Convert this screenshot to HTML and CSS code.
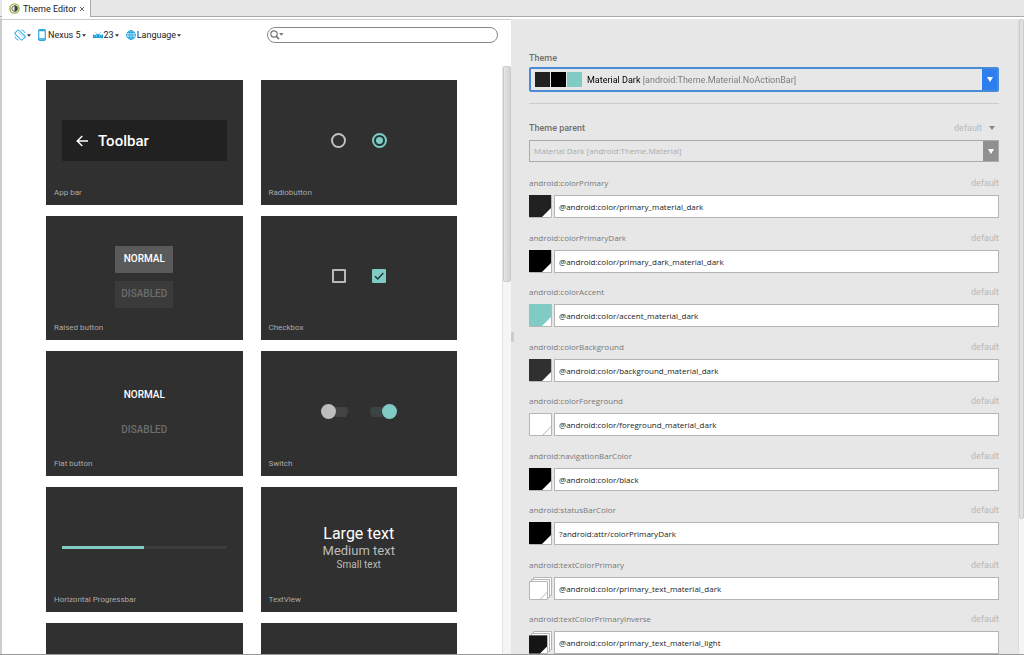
FILE: index.html
```html
<!DOCTYPE html>
<html lang="en">
<head>
<meta charset="utf-8">
<title>Theme Editor</title>
<link rel="stylesheet" href="styles.css">
</head>
<body>
<svg class="defs" aria-hidden="true">
  <symbol id="caret" viewBox="0 0 5 3"><path d="M0 0h5L2.5 3z"/></symbol>
  <symbol id="swatch" viewBox="0 0 23 23"><path class="paper" d="M.5.5h22v22H.5z"/><path class="ink" d="M0 0h22v13l-9 9H0z"/></symbol>
  <symbol id="swatch-light" viewBox="0 0 23 23"><path class="paper" d="M.5.5h22v22H.5z"/><path class="fold" d="M22.5 13l-9 9.500"/></symbol>
  <symbol id="stack" viewBox="0 0 23 23"><path class="paper" d="M4.500.5h18v18h-18z"/><path class="paper" d="M2.500 2.500h18v18h-18z"/><path class="paper" d="M.5 4.500h18v18H.5z"/><path class="ink" d="M0 4.500h18v11l-7 7H0z"/></symbol>
  <symbol id="stack-light" viewBox="0 0 23 23"><path class="paper" d="M4.500.5h18v18h-18z"/><path class="paper" d="M2.500 2.500h18v18h-18z"/><path class="paper" d="M.5 4.500h18v18H.5z"/><path class="fold" d="M18.500 15l-7.500 7.500"/></symbol>
</svg>
<div class="window">
  <header class="tabs">
    <div class="tab">
      <svg class="tab-icon" viewBox="0 0 12 12"><circle cx="6" cy="6" r="5" fill="#fff" stroke="#97b848" stroke-width="1.500"/><circle cx="6" cy="6" r="3" fill="#eee" stroke="#555" stroke-width="1"/><path d="M6 2.500a3.500 3.500 0 0 1 0 7z" fill="#444"/></svg>
      <span>Theme Editor</span>
      <button class="close" aria-label="Close tab"><svg viewBox="0 0 6 6"><path d="M1 1l4 4M5 1L1 5" stroke="#666" stroke-width="1"/></svg></button>
    </div>
  </header>
  <main class="panes">
    <section class="preview">
      <div class="toolbar">
        <div class="tools">
          <button class="tool orient" aria-label="Orientation"><svg class="icon" viewBox="0 0 12 12" fill="none" stroke="#29a9df"><rect x="3.300" y="1" width="5.400" height="10" rx="1" transform="rotate(-45 6 6)"/><path d="M4.500 3.200l4.300 4.300" stroke-width=".6"/><path d="M7.500.8A5.300 5.300 0 0 1 11.200 4.500M4.500 11.200A5.300 5.300 0 0 1 .8 7.500" stroke-width=".9"/></svg><svg class="caret"><use href="#caret"/></svg></button>
          <button class="tool device"><svg class="icon phone" viewBox="0 0 8 12"><rect x=".7" y=".7" width="6.600" height="10.600" rx="1" fill="#fff" stroke="#29a9df" stroke-width="1.200"/><path d="M1 1.500h6M1 10h6" stroke="#29a9df" stroke-width="1.300"/></svg><span>Nexus 5</span><svg class="caret"><use href="#caret"/></svg></button>
          <button class="tool api"><svg class="icon" viewBox="0 0 10 10"><path d="M1 8c0-5.200 8-5.200 8 0z" fill="#1ba1dc"/><path d="M0 4.800h1.300V8H0zM8.700 4.800H10V8H8.700zM2.500 2l1 2M7.500 2l-1 2" fill="#1ba1dc" stroke="#1ba1dc" stroke-width=".5"/><path d="M3 6h1M6 6h1" stroke="#fff" stroke-width=".7"/></svg><span>23</span><svg class="caret"><use href="#caret"/></svg></button>
          <button class="tool"><svg class="icon globe" viewBox="0 0 10 10" fill="none" stroke="#1ba1dc" stroke-width=".9"><circle cx="5" cy="5" r="4.400"/><ellipse cx="5" cy="5" rx="2" ry="4.400"/><path d="M.6 5h8.800M1.300 2.600h7.400M1.300 7.400h7.400M5 .6v8.800"/></svg><span>Language</span><svg class="caret"><use href="#caret"/></svg></button>
        </div>
        <label class="search"><svg viewBox="0 0 14 10"><circle cx="4" cy="4" r="3.200" fill="none" stroke="#777" stroke-width="1.200"/><path d="M6.200 6.200l2.800 3" stroke="#777" stroke-width="1.700"/><path d="M9 3h4.500l-2.200 2.800z" fill="#777"/></svg><input type="search" aria-label="Search components"></label>
      </div>
      <div class="scroller">
        <div class="cards">
          <article class="card">
            <div class="stage"><div class="appbar"><svg viewBox="0 0 12 12"><path d="M12 6H1.500M6.300 1L1.200 6l5.100 5" fill="none" stroke="#fff" stroke-width="1.400"/></svg><span>Toolbar</span></div></div>
            <h3>App bar</h3>
          </article>
          <article class="card">
            <div class="stage pair"><input class="radio" type="radio" name="r" aria-label="Off"><input class="radio" type="radio" name="r" aria-label="On" checked></div>
            <h3>Radiobutton</h3>
          </article>
          <article class="card">
            <div class="stage stacked"><button class="raised">NORMAL</button><button class="raised" disabled>DISABLED</button></div>
            <h3>Raised button</h3>
          </article>
          <article class="card">
            <div class="stage pair"><input class="check" type="checkbox" aria-label="Unchecked"><span class="checked"><input class="check" type="checkbox" aria-label="Checked" checked><svg viewBox="0 0 14 14"><path d="M3 7.200l2.800 2.800L11.300 4" fill="none" stroke="#203c3a" stroke-width="1.500"/></svg></span></div>
            <h3>Checkbox</h3>
          </article>
          <article class="card">
            <div class="stage stacked"><button class="flat">NORMAL</button><button class="flat" disabled>DISABLED</button></div>
            <h3>Flat button</h3>
          </article>
          <article class="card">
            <div class="stage switches"><input class="switch" type="checkbox" role="switch" aria-label="Switch off"><input class="switch" type="checkbox" role="switch" aria-label="Switch on" checked></div>
            <h3>Switch</h3>
          </article>
          <article class="card">
            <div class="stage"><div class="progress" role="progressbar" aria-label="Progress" aria-valuenow="50"><div class="bar" style="width:50%"></div></div></div>
            <h3>Horizontal Progressbar</h3>
          </article>
          <article class="card">
            <div class="stage texts"><p class="large">Large text</p><p class="medium">Medium text</p><p class="small">Small text</p></div>
            <h3>TextView</h3>
          </article>
          <article class="card"></article>
          <article class="card"></article>
        </div>
        <div class="track"><div class="thumb"></div></div>
      </div>
    </section>
    <div class="splitter"><span class="grip"></span></div>
    <section class="editor">
      <div class="form">
        <label class="title" for="theme">Theme</label>
        <div class="combo focused">
          <span class="chip primary"></span><span class="chip dark"></span><span class="chip accent"></span>
          <select id="theme"><option>Material Dark [android:Theme.Material.NoActionBar]</option></select>
          <span class="arrow"><svg viewBox="0 0 6 5"><path d="M0 0h6L3 5z"/></svg></span>
        </div>
        <hr>
        <div class="row parent-row">
          <label class="title" for="parent">Theme parent</label>
          <button class="default menu">default<svg viewBox="0 0 6 4"><path d="M0 0h6L3 4z"/></svg></button>
        </div>
        <div class="combo off">
          <select id="parent" disabled><option>Material Dark [android:Theme.Material]</option></select>
          <span class="arrow"><svg viewBox="0 0 6 5"><path d="M0 0h6L3 5z"/></svg></span>
        </div>
        <div class="attrs">
          <div class="attr"><div class="row"><label for="a1">android:colorPrimary</label><span class="default">default</span></div><div class="field"><svg class="swatch c-primary"><use href="#swatch"/></svg><input id="a1" value="@android:color/primary_material_dark"></div></div>
          <div class="attr"><div class="row"><label for="a2">android:colorPrimaryDark</label><span class="default">default</span></div><div class="field"><svg class="swatch c-black"><use href="#swatch"/></svg><input id="a2" value="@android:color/primary_dark_material_dark"></div></div>
          <div class="attr"><div class="row"><label for="a3">android:colorAccent</label><span class="default">default</span></div><div class="field"><svg class="swatch c-accent"><use href="#swatch"/></svg><input id="a3" value="@android:color/accent_material_dark"></div></div>
          <div class="attr"><div class="row"><label for="a4">android:colorBackground</label><span class="default">default</span></div><div class="field"><svg class="swatch c-bg"><use href="#swatch"/></svg><input id="a4" value="@android:color/background_material_dark"></div></div>
          <div class="attr"><div class="row"><label for="a5">android:colorForeground</label><span class="default">default</span></div><div class="field"><svg class="swatch"><use href="#swatch-light"/></svg><input id="a5" value="@android:color/foreground_material_dark"></div></div>
          <div class="attr"><div class="row"><label for="a6">android:navigationBarColor</label><span class="default">default</span></div><div class="field"><svg class="swatch c-black"><use href="#swatch"/></svg><input id="a6" value="@android:color/black"></div></div>
          <div class="attr"><div class="row"><label for="a7">android:statusBarColor</label><span class="default">default</span></div><div class="field"><svg class="swatch c-black"><use href="#swatch"/></svg><input id="a7" value="?android:attr/colorPrimaryDark"></div></div>
          <div class="attr"><div class="row"><label for="a8">android:textColorPrimary</label><span class="default">default</span></div><div class="field"><svg class="swatch"><use href="#stack-light"/></svg><input id="a8" value="@android:color/primary_text_material_dark"></div></div>
          <div class="attr"><div class="row"><label for="a9">android:textColorPrimaryInverse</label><span class="default">default</span></div><div class="field"><svg class="swatch c-ink"><use href="#stack"/></svg><input id="a9" value="@android:color/primary_text_material_light"></div></div>
        </div>
      </div>
      <div class="track"><div class="thumb"></div></div>
    </section>
  </main>
</div>
</body>
</html>
```
FILE: styles.css
```css
* { box-sizing: border-box; margin: 0; padding: 0; }
body { font: 9px/12px Roboto, "Noto Sans", sans-serif; color: #222; background: #e7e7e7; }
button, input, select { font: inherit; color: inherit; border: 0; background: none; outline: 0; appearance: none; }
svg { display: block; }
.defs { position: absolute; width: 0; height: 0; }

.window { height: 100vh; display: flex; flex-direction: column; overflow: hidden; border-bottom: 1px solid #999; }
.tabs { display: flex; flex: none; height: 17px; border-bottom: 1px solid #aaa; }
.tab { display: flex; align-items: center; height: 17px; margin-left: 2px; padding: 0 5px 0 7px; background: #fff; border-right: 1px solid #aaa; }
.tab-icon { width: 11px; height: 11px; margin-right: 3px; }
.close { width: 6px; height: 6px; margin-left: 3px; }

.panes { flex: 1; min-height: 0; display: flex; border-left: 2px solid #ccc; border-top: 2px solid #fff; }
.preview { flex: 1; min-width: 0; display: flex; flex-direction: column; background: #fff; border-top: 1px solid #ccc; }
.toolbar { flex: none; display: flex; align-items: center; justify-content: space-between; height: 30px; padding: 0 13px 0 12px; }
.tools { display: flex; align-items: center; }
.tool { display: flex; align-items: center; gap: 1px; margin-right: 7px; white-space: nowrap; }
.icon { width: 12px; height: 12px; }
.phone { width: 8px; height: 12px; margin-right: 1px; }
.api .icon, .globe { width: 10px; height: 10px; }
.caret { width: 4px; height: 3px; fill: #333; }
.search { display: flex; align-items: center; width: 231px; height: 16px; padding: 0 6px 0 2px; border: 1px solid #888; border-radius: 8px; }
.search svg { width: 14px; height: 10px; }
.search input { flex: 1; min-width: 0; }

.scroller { flex: 1; min-height: 0; display: flex; padding-top: 16px; }
.cards { flex: 1; display: grid; grid-template-columns: 1fr 1fr; grid-template-rows: 125px 124px; grid-auto-rows: 125px; gap: 11px 18px; padding: 14px 45px 0 44px; }
.card { display: flex; flex-direction: column; padding: 0 8px 7px; background: #303030; color: #fff; }
.card h3 { font-size: 8px; line-height: 10px; font-weight: 400; color: #aaa; }
.stage { flex: 1; display: flex; align-items: center; padding: 13px 8px 0; }
.appbar { flex: 1; display: flex; align-items: center; gap: 10px; height: 41px; padding-left: 14px; background: #212121; font-size: 15px; font-weight: 500; }
.appbar svg { width: 12px; height: 12px; }
.pair { justify-content: center; gap: 26px; }
.radio { width: 15px; height: 15px; border: 2px solid #c1c1c1; border-radius: 50%; }
.radio:checked { border-color: #80cbc4; background: radial-gradient(circle, #80cbc4 3px, #203c3a 4px); }
.check { display: block; width: 14px; height: 14px; border: 2px solid #b8b8b8; border-radius: 1px; }
.check:checked { background: #80cbc4; border-color: #80cbc4; }
.checked { display: grid; }
.checked > * { grid-area: 1 / 1; width: 14px; height: 14px; }
.stacked { flex-direction: column; justify-content: center; gap: 8px; padding-top: 14px; }
.raised, .flat { width: 58px; height: 27px; font-size: 10px; font-weight: 500; text-align: center; border-radius: 1px; }
.raised { background: #5a5a5a; }
.raised:disabled { background: #3b3b3b; color: #6d6d6d; }
.flat:disabled { color: #6d6d6d; }
.switches { justify-content: center; gap: 22px; }
.switch { display: flex; align-items: center; width: 27px; height: 15px; background: linear-gradient(#434343, #434343) right / 20px 10px no-repeat; border-radius: 8px; }
.switch::before { content: ""; width: 15px; height: 15px; border-radius: 50%; background: #bdbdbd; }
.switch:checked { justify-content: flex-end; background: linear-gradient(#3a4443, #3a4443) left / 20px 10px no-repeat; }
.switch:checked::before { background: #80cbc4; }
.progress { flex: 1; height: 3px; background: #3c3c3c; }
.bar { height: 3px; background: #80cbc4; }
.texts { flex-direction: column; justify-content: center; }
.large { font-size: 16px; line-height: 19px; }
.medium { font-size: 13px; line-height: 16px; color: #bbb; }
.small { font-size: 10px; line-height: 12px; color: #bbb; }

.track { flex: none; width: 9px; background: #f5f5f5; border-left: 1px solid #e4e4e4; }
.thumb { height: 216px; background: linear-gradient(90deg, #e6e6e6, #d2d2d2); border: 1px solid #ccc; border-radius: 2px; }
.splitter { flex: none; width: 4px; display: flex; align-items: center; }
.grip { width: 3px; height: 10px; background: #ccc; border-radius: 1px; }

.editor { flex: 1; min-width: 0; display: flex; justify-content: space-between; }
.form { flex: 1; min-width: 0; padding: 33px 19px 0 14px; }
.title { display: block; font-weight: 500; line-height: 12px; color: #707070; }
.combo { display: flex; align-items: center; height: 22px; border: 1px solid #aaa; }
.combo select { flex: 1; min-width: 0; height: 16px; padding-left: 4px; }
.combo .arrow { align-self: stretch; display: flex; align-items: center; justify-content: center; width: 15px; background: #909090; }
.arrow svg { width: 6px; height: 5px; fill: #fff; }
.focused { height: 25px; margin-top: 3px; padding-left: 4px; border: 2px solid #4a8bd8; border-radius: 2px; }
.focused select { color: transparent; background: linear-gradient(90deg, #000 57px, #777 57px); background-clip: text; -webkit-background-clip: text; }
.focused option { color: #000; }
.focused .arrow { background: #2d7ff0; }
.chip { width: 15px; height: 15px; margin-right: 1px; }
.chip.primary { background: #212121; }
.chip.dark { background: #000; }
.chip.accent { background: #80cbc4; }
.off select { font: 8px/12px "Open Sans", "Noto Sans", sans-serif; color: #aaa; opacity: 1; }
hr { margin: 11px 0 18px; border: 0; border-top: 1px solid #ccc; }
.row { display: flex; align-items: center; justify-content: space-between; height: 12px; }
.parent-row { margin-bottom: 6px; }
.default { color: #b8b8b8; }
.menu { display: flex; align-items: center; gap: 7px; margin-right: 4px; }
.menu svg { width: 6px; height: 4px; fill: #888; }
.attrs { display: flex; flex-direction: column; padding-top: 15px; }
.attr { font: 8px/12px "Open Sans", "Noto Sans", sans-serif; color: #777; padding-bottom: 13px; }
.attr:nth-child(odd) { padding-bottom: 14px; }
.attr .row { margin-bottom: 6px; }
.attr .default { font: 9px/12px Roboto, sans-serif; }
.field { display: flex; gap: 2px; }
.swatch { flex: none; width: 23px; height: 23px; color: #212121; }
.field input { flex: 1; min-width: 0; height: 23px; padding: 0 4px; color: #222; background: #fff; border: 1px solid #b5b5b5; }
.paper { fill: #fff; stroke: #b5b5b5; }
.fold { fill: none; stroke: #b5b5b5; }
.ink { fill: currentColor; }
.c-black { color: #000; }
.c-accent { color: #80cbc4; }
.c-bg { color: #303030; }
.c-ink { color: #151515; }
.editor .track { width: 6px; border-left-color: #ddd; }
.editor .thumb { height: 500px; background: #e0e0e0; }
```
